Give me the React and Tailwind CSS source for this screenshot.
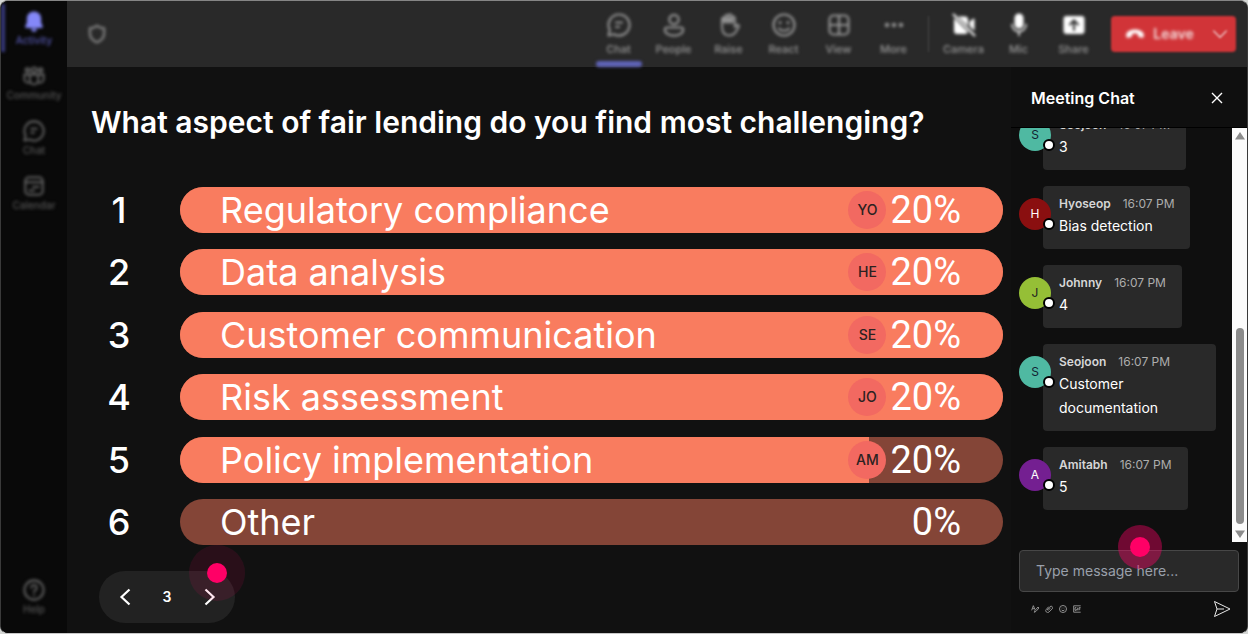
import React, { useState } from "react";

const BellIcon = (props) => (
  <svg viewBox="0 0 24 24" fill="currentColor" {...props}>
    <path d="M12 1.500c-4.400 0-7.800 3.400-7.800 7.800v4.400L2.500 17.600c-.4.900.2 1.900 1.200 1.900h16.600c1 0 1.600-1 1.200-1.900l-1.700-3.900V9.300c0-4.400-3.400-7.800-7.800-7.800z" />
    <path d="M8.800 20.500h6.400a3.200 3.200 0 0 1-6.400 0z" />
  </svg>
);

const CommunityIcon = (props) => (
  <svg viewBox="0 0 24 24" fill="none" stroke="currentColor" strokeWidth="2.200" {...props}>
    <circle cx="12" cy="5.500" r="2.700" />
    <circle cx="4.800" cy="5.500" r="2" />
    <circle cx="19.200" cy="5.500" r="2" />
    <path d="M7.500 10.500h9v6a4.500 4.500 0 0 1-9 0zM7.500 10.500H1.500v5c0 2.500 2.500 4.500 6 3.500M16.500 10.500h6v5c0 2.500-2.500 4.500-6 3.500" />
  </svg>
);

const ChatIcon = (props) => (
  <svg viewBox="0 0 24 24" fill="none" stroke="currentColor" strokeWidth="2.200" strokeLinecap="round" strokeLinejoin="round" {...props}>
    <path d="M12 1.500a10.500 10.500 0 1 1-5 19.700L1.500 22.500l1.300-5.500A10.500 10.500 0 0 1 12 1.500z" />
    <path d="M9 9.500h6M9 14h3" />
  </svg>
);

const CalendarIcon = (props) => (
  <svg viewBox="0 0 24 24" fill="none" stroke="currentColor" strokeWidth="2.200" strokeLinecap="round" {...props}>
    <rect x="2.500" y="2.500" width="19" height="19" rx="4" />
    <path d="M2.500 8h19M11 13h6M7 17h5" />
  </svg>
);

const HelpIcon = (props) => (
  <svg viewBox="0 0 24 24" fill="none" stroke="currentColor" strokeWidth="2.200" strokeLinecap="round" {...props}>
    <circle cx="12" cy="12" r="10.500" />
    <path d="M9 9.500a3 3 0 1 1 4.500 2.600c-1 .6-1.500 1.200-1.500 2.200M12 17.500v.1" />
  </svg>
);

const PeopleIcon = (props) => (
  <svg viewBox="0 0 24 24" fill="none" stroke="currentColor" strokeWidth="2.200" {...props}>
    <circle cx="12" cy="6.500" r="4.700" />
    <path d="M5 14.500h14c1.200 0 2.200 1 2.200 2.200 0 3.300-3.800 6-9.200 6s-9.200-2.700-9.200-6c0-1.200 1-2.200 2.200-2.200z" />
  </svg>
);

const RaiseIcon = (props) => (
  <svg viewBox="0 0 24 24" fill="none" stroke="currentColor" strokeWidth="2" strokeLinecap="round" strokeLinejoin="round" {...props}>
    <path d="M5 13V6a1.600 1.600 0 0 1 3.200 0v4V3.500a1.600 1.600 0 0 1 3.200 0V10 2.800a1.600 1.600 0 0 1 3.200 0V10 5a1.600 1.600 0 0 1 3.200 0v9l2-1.800c1.200-1 2.700.4 2 1.600-2.500 4.500-4.200 8.700-9.800 8.700-4.500 0-7-3-7-9.500z" />
    <path d="M5.500 4.500h11v5h-11z" fill="currentColor" stroke="none" />
  </svg>
);

const ReactIcon = (props) => (
  <svg viewBox="0 0 24 24" fill="none" stroke="currentColor" strokeWidth="2.200" strokeLinecap="round" {...props}>
    <circle cx="12" cy="12" r="10.500" />
    <path d="M8 9.500v.2M16 9.500v.2" strokeWidth="3" />
    <path d="M7 15.500c2.500 3 7.500 3 10 0" />
  </svg>
);

const ViewIcon = (props) => (
  <svg viewBox="0 0 24 24" fill="none" stroke="currentColor" strokeWidth="2.200" {...props}>
    <rect x="2.500" y="2.500" width="19" height="19" rx="4" />
    <path d="M12 2.500v19M2.500 12h19" />
  </svg>
);

const MoreIcon = (props) => (
  <svg viewBox="0 0 24 24" fill="currentColor" {...props}>
    <circle cx="5" cy="12" r="2.300" />
    <circle cx="12" cy="12" r="2.300" />
    <circle cx="19" cy="12" r="2.300" />
  </svg>
);

const CameraOffIcon = (props) => (
  <svg viewBox="0 0 24 24" fill="currentColor" {...props}>
    <path d="M6 3.500h7a3 3 0 0 1 3 3V13zM2 5l14 14c-.6 1.200-1.600 2-3 2H5a3 3 0 0 1-3-3zM17.500 8.500l3.800-2.800c.6-.4 1.200 0 1.200.6v11.400l-5-4.500z" />
    <path d="M1.500 1.500l21 21" stroke="currentColor" strokeWidth="2" strokeLinecap="round" />
  </svg>
);

const MicIcon = (props) => (
  <svg viewBox="0 0 24 24" fill="currentColor" {...props}>
    <rect x="7.500" y="0.500" width="9" height="15" rx="4.500" />
    <path d="M5 11.500a7 7 0 0 0 14 0M12 18.500v4" fill="none" stroke="currentColor" strokeWidth="1.500" strokeLinecap="round" />
  </svg>
);

const ShareIcon = (props) => (
  <svg viewBox="0 0 24 24" {...props}>
    <rect x="1.500" y="3" width="21" height="18" rx="3" fill="currentColor" />
    <path d="M12 17V8M8 11.500l4-4 4 4" fill="none" stroke="#292929" strokeWidth="2" strokeLinecap="round" />
  </svg>
);

const railItems = [
  { label: "Activity", Icon: BellIcon, active: true },
  { label: "Community", Icon: CommunityIcon },
  { label: "Chat", Icon: ChatIcon },
  { label: "Calendar", Icon: CalendarIcon },
];

const toolbarItems = [
  { label: "Chat", Icon: ChatIcon, active: true },
  { label: "People", Icon: PeopleIcon },
  { label: "Raise", Icon: RaiseIcon },
  { label: "React", Icon: ReactIcon },
  { label: "View", Icon: ViewIcon },
  { label: "More", Icon: MoreIcon },
];

const deviceItems = [
  { label: "Camera", Icon: CameraOffIcon },
  { label: "Mic", Icon: MicIcon },
  { label: "Share", Icon: ShareIcon },
];

const options = [
  { label: "Regulatory compliance", percent: 20, voter: "YO", fill: 100 },
  { label: "Data analysis", percent: 20, voter: "HE", fill: 100 },
  { label: "Customer communication", percent: 20, voter: "SE", fill: 100 },
  { label: "Risk assessment", percent: 20, voter: "JO", fill: 100 },
  { label: "Policy implementation", percent: 20, voter: "AM", fill: 83.7 },
  { label: "Other", percent: 0, fill: 0 },
];

const messages = [
  { name: "Seojoon", text: "3", avatar: "bg-[#4fb9a2] text-[#123]" },
  { name: "Hyoseop", text: "Bias detection", avatar: "bg-[#8a0f10] text-white" },
  { name: "Johnny", text: "4", avatar: "bg-[#95bf36] text-[#222]" },
  { name: "Seojoon", text: "Customer documentation", avatar: "bg-[#4fb9a2] text-[#123]" },
  { name: "Amitabh", text: "5", avatar: "bg-[#741f91] text-white" },
];

function RailButton({ label, Icon, active }) {
  return (
    <button
      type="button"
      className={`relative flex w-full flex-col items-center gap-0.5 text-[10px] leading-3 font-medium blur-[1px] ${
        active ? "text-[#5456ac]" : "text-[#555555]"
      }`}
    >
      {active && <span className="absolute -top-1.5 left-0 h-12 w-1 bg-[#383a7c]" />}
      <Icon className={`size-[22px] ${active ? "text-[#8488f8]" : "text-[#606060]"}`} />
      {label}
    </button>
  );
}

function ToolbarButton({ label, Icon, active, bright }) {
  return (
    <button
      type="button"
      className="relative flex h-full w-[55px] flex-col items-center gap-1 pt-3 text-[11px] leading-4 font-medium text-[#979797] blur-[1px]"
    >
      <Icon className={`size-6 ${bright ? "text-white" : "text-[#939393]"}`} />
      {label}
      {active && <span className="absolute bottom-0 h-1.5 w-[46px] rounded-sm bg-[#5f63b8]" />}
    </button>
  );
}

function PollOption({ index, option }) {
  return (
    <li className="flex h-[46px] items-center gap-[33px]">
      <span className="w-14 text-center text-4xl font-medium">{index}</span>
      <div className="relative flex h-full flex-1 items-center overflow-hidden rounded-full bg-[#844537] pr-[42px] pl-10">
        <div className="absolute inset-y-0 left-0 bg-[#f97c5f]" style={{ width: `${option.fill}%` }} />
        <span className="relative flex-1 truncate text-4xl leading-[46px]">{option.label}</span>
        <span className="relative flex items-center gap-1">
          {option.voter && (
            <span className="flex size-[38px] items-center justify-center rounded-full bg-[#f26961] text-sm font-medium text-[#2b2222]">
              {option.voter}
            </span>
          )}
          <span className="font-['Roboto',sans-serif] text-[38px] leading-[46px]">{option.percent}%</span>
        </span>
      </div>
    </li>
  );
}

function Message({ name, text, avatar }) {
  return (
    <li className="flex shrink-0 items-start">
      <div className={`relative z-10 mt-3 flex size-8 shrink-0 items-center justify-center rounded-full text-xs ${avatar}`}>
        {name[0]}
        <span className="absolute -right-1 bottom-0 size-3 rounded-full border-2 border-black bg-white" />
      </div>
      <div className="-ml-2 max-w-[173px] rounded bg-[#292929] px-4 pt-2 pb-[11px]">
        <p className="flex gap-3 text-xs leading-5">
          <span className="font-semibold text-[#d6d6d6]">{name}</span>
          <span className="whitespace-nowrap text-[#adadad]">16:07 PM</span>
        </p>
        <p className="text-sm leading-6">{text}</p>
      </div>
    </li>
  );
}

function App() {
  const [page, setPage] = useState(3);
  const [draft, setDraft] = useState("");

  return (
    <div className="h-screen bg-[#d5d7d5] font-['Inter',sans-serif] text-white">
      <div className="flex h-full overflow-hidden rounded-lg border border-[#3a3a3a] border-t-[#858585] border-b-[#c8c8c8] bg-[#111111]">
        <nav className="flex w-[66px] shrink-0 flex-col bg-[#090909] pt-[9px] pb-[18px]">
          <div className="flex flex-1 flex-col justify-between blur-[1px]">
            <div className="flex flex-col gap-[19px]">
              {railItems.map((item) => (
                <RailButton key={item.label} {...item} />
              ))}
            </div>
            <RailButton label="Help" Icon={HelpIcon} />
          </div>
        </nav>

        <div className="flex min-w-0 flex-1 flex-col">
          <header className="h-[66px] shrink-0 bg-[#292929]">
            <div className="flex h-full items-center pr-[11px] pl-5 blur-[1px]">
              <svg viewBox="0 0 24 24" className="size-5 text-[#7a7a7a] blur-[1px]" fill="none" stroke="currentColor" strokeWidth="3" strokeLinejoin="round">
                <path d="M12 2c2.500 2 5 3 8.500 3v6.500c0 5-3.500 8.500-8.500 10.500-5-2-8.500-5.500-8.500-10.500V5C7 5 9.500 4 12 2z" />
              </svg>
              <div className="ml-auto flex h-full">
                {toolbarItems.map((item) => (
                  <ToolbarButton key={item.label} {...item} />
                ))}
              </div>
              <div className="mx-[7px] h-9 w-px bg-[#4a4a4a]" />
              <div className="flex h-full">
                {deviceItems.map((item) => (
                  <ToolbarButton key={item.label} bright {...item} />
                ))}
              </div>
              <button
                type="button"
                className="ml-2.5 flex h-9 w-[125px] items-center justify-between rounded-sm bg-[#d13438] pr-1.5 pl-3.5 text-sm font-semibold text-[#f3dede]"
              >
                <svg viewBox="0 0 24 24" className="size-5 text-white blur-[1px]" fill="currentColor">
                  <path d="M12 6.500c5 0 9.500 2 10.500 5.500.3 1.200.2 2.500-.2 3.500-.3.800-1 1.100-1.800 1l-3.300-.6c-.8-.1-1.300-.7-1.500-1.500l-.5-2.300c-2-.8-4.400-.8-6.400 0l-.5 2.300c-.2.8-.7 1.400-1.500 1.500l-3.300.6c-.8.1-1.500-.2-1.800-1-.4-1-.5-2.300-.2-3.500C2.500 8.500 7 6.500 12 6.500z" />
                </svg>
                <span className="blur-[1px]">Leave</span>
                <svg viewBox="0 0 24 24" className="ml-2 size-5" fill="none" stroke="currentColor" strokeWidth="1.500">
                  <path d="M4 8l8 8 8-8" />
                </svg>
              </button>
            </div>
          </header>

          <div className="flex min-h-0 flex-1">
            <main className="min-w-0 flex-1 pt-[37px] pr-2 pl-6">
              <h1 className="text-3xl font-semibold">What aspect of fair lending do you find most challenging?</h1>
              <ol className="mt-[47px] flex h-[358px] flex-col justify-between">
                {options.map((option, i) => (
                  <PollOption key={option.label} index={i + 1} option={option} />
                ))}
              </ol>
              <div className="relative mt-[26px] ml-2 flex h-[52px] w-[136px] items-center justify-between rounded-full bg-[#222222] px-3.5">
                <button type="button" aria-label="Previous" onClick={() => setPage(Math.max(1, page - 1))}>
                  <svg viewBox="0 0 24 24" className="size-6" fill="none" stroke="currentColor" strokeWidth="2.200">
                    <path d="M16.500 4.500L8.500 12l8 7.500" />
                  </svg>
                </button>
                <span className="text-sm font-semibold">{page}</span>
                <button type="button" aria-label="Next" onClick={() => setPage(page + 1)}>
                  <svg viewBox="0 0 24 24" className="size-6" fill="none" stroke="currentColor" strokeWidth="2.200">
                    <path d="M8.500 4.500l8 7.500-8 7.500" />
                  </svg>
                </button>
                <span className="pointer-events-none absolute -top-[26px] -right-2.5 flex size-14 items-center justify-center rounded-full bg-[#ff0066]/10">
                  <span className="size-5 rounded-full bg-[#ff0066]" />
                </span>
              </div>
            </main>

            <aside className="flex w-[236px] shrink-0 flex-col bg-[#0f0f0f]">
              <div className="flex h-[61px] shrink-0 items-center justify-between border-b border-black pt-0.5 pr-6 pl-5">
                <h2 className="text-base font-semibold">Meeting Chat</h2>
                <button type="button" aria-label="Close chat">
                  <svg viewBox="0 0 12 12" className="size-3" fill="none" stroke="currentColor" strokeWidth="1.400">
                    <path d="M1 1l10 10M11 1L1 11" />
                  </svg>
                </button>
              </div>
              <div className="flex min-h-0 flex-1">
                <ul className="flex flex-1 flex-col justify-end gap-4 overflow-hidden pb-8 pl-2">
                  {messages.map((message, i) => (
                    <Message key={i} {...message} />
                  ))}
                </ul>
                <div className="flex w-[15px] flex-col items-center bg-[#fbfbfb] py-1">
                  <svg viewBox="0 0 10 8" className="h-2 w-2.5 fill-[#8b8b8b]">
                    <path d="M5 0l5 7.500H0z" />
                  </svg>
                  <div className="mt-auto mb-1.5 h-[196px] w-2 rounded-full bg-[#8b8b8b]" />
                  <svg viewBox="0 0 10 8" className="h-2 w-2.5 fill-[#8b8b8b]">
                    <path d="M0 .5h10L5 8z" />
                  </svg>
                </div>
              </div>
              <form className="relative mt-2 shrink-0 px-2" onSubmit={(e) => e.preventDefault()}>
                <input
                  type="text"
                  aria-label="Message"
                  placeholder="Type message here..."
                  value={draft}
                  onChange={(e) => setDraft(e.target.value)}
                  className="h-[42px] w-full rounded border border-[#474747] bg-[#292929] px-4 pb-0.5 text-sm placeholder:text-[#9aa0ab]"
                />
                <span className="pointer-events-none absolute -top-[25px] left-[107px] flex size-[44px] items-center justify-center rounded-full bg-[#ff0066]/40">
                  <span className="size-5 rounded-full bg-[#ff0066]" />
                </span>
                <div className="flex h-[41px] items-center gap-1.5 pr-2 pb-2 pl-3 text-[#a0a0a0]">
                  <button type="button" aria-label="Format">
                    <svg viewBox="0 0 12 12" className="size-2" fill="none" stroke="currentColor" strokeWidth="1.300">
                      <path d="M1 8l2.500-7L6 7M2 5.500h3M5 11l1-3 4.500-5L12 4.500 7.500 9.500z" />
                    </svg>
                  </button>
                  <button type="button" aria-label="Attach">
                    <svg viewBox="0 0 12 12" className="size-2" fill="none" stroke="currentColor" strokeWidth="1.300">
                      <path d="M3 7.500l4.500-5a2.300 2.300 0 0 1 3.300 3.300L6 10.500a2.800 2.800 0 0 1-4-4L5.500 2.500M4.500 8.500l4-4.500" />
                    </svg>
                  </button>
                  <button type="button" aria-label="Emoji">
                    <svg viewBox="0 0 12 12" className="size-2" fill="none" stroke="currentColor" strokeWidth="1.300">
                      <circle cx="6" cy="6" r="5.300" />
                      <path d="M3.500 7c1 2 4 2 5 0M4 4.500h1M7 4.500h1" />
                    </svg>
                  </button>
                  <button type="button" aria-label="GIF">
                    <svg viewBox="0 0 12 12" className="size-2" fill="none" stroke="currentColor" strokeWidth="1.300">
                      <path d="M11.500 1.200H1v9.600h10.500M5 4H3v4h2V6M7 4v4M9 8V4h2.500M9 6h2" />
                    </svg>
                  </button>
                  <button type="submit" aria-label="Send" className="ml-auto text-[#e8e8e8]">
                    <svg viewBox="0 0 18 18" className="size-[18px]" fill="none" stroke="currentColor" strokeLinejoin="round">
                      <path d="M1.500 1.500L17 9 1.500 16.500 4 9zM4 9h7" />
                    </svg>
                  </button>
                </div>
              </form>
            </aside>
          </div>
        </div>
      </div>
    </div>
  );
}

export default App;
